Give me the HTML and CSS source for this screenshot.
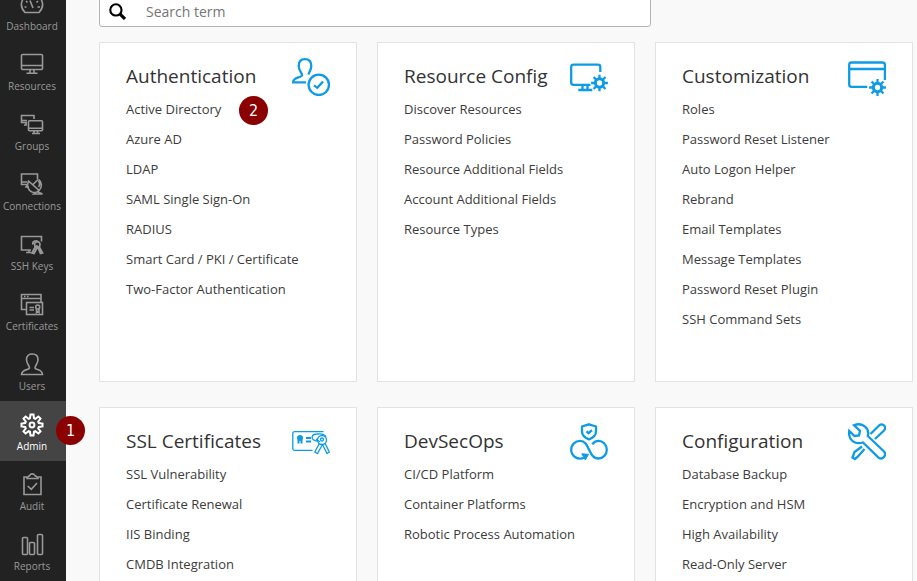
FILE: index.html
```html
<!DOCTYPE html>
<html lang="en">
<head>
<meta charset="utf-8">
<title>Admin</title>
<link rel="stylesheet" href="styles.css">
</head>
<body>
<svg class="defs" aria-hidden="true">
  <symbol id="cog" viewBox="-9 -9 18 18">
    <circle r="4.400" fill="none" stroke="currentColor" stroke-width="3.200"/>
    <path d="M0-5V-8.900M0 5V8.900M5 0H8.900M-5 0H-8.900M3.600-3.600L6.300-6.300M3.600 3.600L6.300 6.300M-3.600 3.600L-6.300 6.300M-3.600-3.600L-6.300-6.300" fill="none" stroke="currentColor" stroke-width="2.400"/>
  </symbol>
</svg>
<div class="app">
  <nav class="sidebar">
    <a class="nav-item" href="#">
      <svg class="nav-icon" viewBox="0 0 24 24"><path d="M5 19.500C-2 12 2 2 12 2S26 12 19 19.500ZM10 7.500L13 15M4.500 14H6.500M17.500 14H20M6 8L7.500 9.500M18 8L16.500 9.500"/></svg>
      <span>Dashboard</span>
    </a>
    <a class="nav-item" href="#">
      <svg class="nav-icon" viewBox="0 0 24 24"><rect x="1.500" y="1.500" width="21" height="15" rx="1"/><path d="M2 12.500H22M10 17V20M14 17V20M6.500 20.300H17.500"/></svg>
      <span>Resources</span>
    </a>
    <a class="nav-item" href="#">
      <svg class="nav-icon" viewBox="0 0 24 24"><path d="M14 6V2.500H1.500V9.500H7M2 7.500H7M4 12H7M6 9.500V12"/><rect x="8.500" y="7.800" width="14" height="10" rx="1"/><path d="M9 15.200H22M14 18V20.500M17.500 18V20.500M12 20.500H20"/></svg>
      <span>Groups</span>
    </a>
    <a class="nav-item" href="#">
      <svg class="nav-icon" viewBox="0 0 24 24"><path d="M17.500 6V1H1.500V11.500H7M2 9H7M5 14H9M7 11.500V14M8.500 8C6.500 13 8 17.500 12 19C15 20 18 19 19 17.500ZM19 17.500C22.500 14 22 9 18.500 6.500M12.500 12L18 6.500M18.500 8C20 10 20 12 18.500 14M17 18.500L22.500 21H13.500L15 19.500"/></svg>
      <span>Connections</span>
    </a>
    <a class="nav-item" href="#">
      <svg class="nav-icon" viewBox="0 0 24 24"><path d="M21.500 8.500V3.500H1.500V17H11M6 19.500H11M9 17V19.500"/><circle cx="17.300" cy="11.500" r="2.700"/><path d="M13 11.500C12 7.500 17 7 18.500 9M15.500 13.500L12 20L14 20.500L17.500 14M18 14L20.500 20.500L22.500 20L19 13.500M16 12.500L19 14.500" stroke-width="1.800"/></svg>
      <span>SSH Keys</span>
    </a>
    <a class="nav-item" href="#">
      <svg class="nav-icon" viewBox="0 0 24 24"><path d="M6 16.500H1.500V1.500H21V9M2 5.500H21M4 3.500H5.500M7 3.500H8.500"/><rect x="6.500" y="9.500" width="16" height="12"/><path d="M9.500 14.500H14M9.500 17H14M16.500 16V19.500L17.700 18.500L19 19.500V16"/><circle cx="17.700" cy="14" r="2"/></svg>
      <span>Certificates</span>
    </a>
    <a class="nav-item" href="#">
      <svg class="nav-icon" viewBox="0 0 24 24"><path d="M9.500 15C9.500 12.500 6.500 11 6.500 6.500C6.500 2.500 9 1 12.200 1S18 2.500 18 6.500C18 11 15 12.500 15 15C15.500 17 22.500 16.500 22.500 21.500H1.500C1.500 16.500 9 17 9.500 15Z"/></svg>
      <span>Users</span>
    </a>
    <a class="nav-item nav-item-active" href="#" aria-current="page">
      <svg class="nav-icon" viewBox="-12 -12 24 24"><path d="M-2-6.800L-1.500-10.500H1.500L2-6.800L3.400-6.200L6.400-8.500L8.500-6.400L6.200-3.400L6.800-2L10.500-1.500V1.500L6.800 2L6.200 3.400L8.500 6.400L6.400 8.500L3.400 6.200L2 6.800L1.500 10.500H-1.500L-2 6.800L-3.400 6.200L-6.400 8.500L-8.500 6.400L-6.200 3.400L-6.800 2L-10.500 1.500V-1.500L-6.800-2L-6.200-3.400L-8.500-6.400L-6.400-8.500L-3.400-6.200Z"/><circle r="2.400"/></svg>
      <span>Admin</span>
      <b class="badge badge-nav">1</b>
    </a>
    <a class="nav-item" href="#">
      <svg class="nav-icon" viewBox="0 0 24 24"><path d="M7 4H4V21.500H21V4H18M7 5.500C7 3 9.500 3.500 10 2C10.500 .5 14 .5 14.500 2C15 3.500 18 3 18 5.500ZM7.700 13L11.300 16.300L17 10"/></svg>
      <span>Audit</span>
    </a>
    <a class="nav-item" href="#">
      <svg class="nav-icon" viewBox="0 0 24 24"><rect x="2.500" y="4.500" width="5" height="17" rx="1"/><rect x="9.500" y="9.500" width="5" height="12" rx="1"/><rect x="17.500" y="1.500" width="5" height="20" rx="1"/></svg>
      <span>Reports</span>
    </a>
  </nav>

  <main class="content">
    <form class="search" role="search">
      <svg class="search-icon" viewBox="0 0 16 16"><circle cx="6.500" cy="6.500" r="5.300"/><path d="M10.500 10.500L15 15" stroke-width="3"/></svg>
      <input type="search" aria-label="Search term" placeholder="Search term">
    </form>

    <div class="cards">
      <section class="card">
        <header class="card-head">
          <h2>Authentication</h2>
          <svg class="card-icon" viewBox="0 0 38 38"><path d="M14 24.300H1.200C1 19 8.500 20 10 17.500C10.500 15 6.700 13 6.700 8C6.700 3.500 9 1.200 13 1.200S19.300 3.500 19.300 8C19.300 12 17 13.500 16.500 16.500"/><circle cx="26.800" cy="26.800" r="10.200"/><path d="M22 27.300L25.300 29.800L31 23.500"/></svg>
        </header>
        <ul>
          <li><a href="#">Active Directory</a><b class="badge badge-link">2</b></li>
          <li><a href="#">Azure AD</a></li>
          <li><a href="#">LDAP</a></li>
          <li><a href="#">SAML Single Sign-On</a></li>
          <li><a href="#">RADIUS</a></li>
          <li><a href="#">Smart Card / PKI / Certificate</a></li>
          <li><a href="#">Two-Factor Authentication</a></li>
        </ul>
      </section>

      <section class="card">
        <header class="card-head">
          <h2>Resource Config</h2>
          <svg class="card-icon" viewBox="0 0 38 38"><path d="M30.300 14V9Q30.300 6.700 28 6.700H3.500Q1.200 6.700 1.200 9V24.500Q1.200 26.800 3.500 26.800H20.500M12.500 27V32M17.500 27V32M8.300 32H22.300"/><use href="#cog" x="21" y="16.500" width="17" height="17"/></svg>
        </header>
        <ul>
          <li><a href="#">Discover Resources</a></li>
          <li><a href="#">Password Policies</a></li>
          <li><a href="#">Resource Additional Fields</a></li>
          <li><a href="#">Account Additional Fields</a></li>
          <li><a href="#">Resource Types</a></li>
        </ul>
      </section>

      <section class="card">
        <header class="card-head">
          <h2>Customization</h2>
          <svg class="card-icon" viewBox="0 0 38 38"><path d="M36.900 22V7Q36.900 4.500 34.500 4.500H3.500Q1.200 4.500 1.200 7V26.500Q1.200 28.800 3.500 28.800H19.300M1.200 11H36.900"/><use href="#cog" x="21" y="21" width="17" height="17"/></svg>
        </header>
        <ul>
          <li><a href="#">Roles</a></li>
          <li><a href="#">Password Reset Listener</a></li>
          <li><a href="#">Auto Logon Helper</a></li>
          <li><a href="#">Rebrand</a></li>
          <li><a href="#">Email Templates</a></li>
          <li><a href="#">Message Templates</a></li>
          <li><a href="#">Password Reset Plugin</a></li>
          <li><a href="#">SSH Command Sets</a></li>
        </ul>
      </section>

      <section class="card">
        <header class="card-head">
          <h2>SSL Certificates</h2>
          <svg class="card-icon card-icon-fine" viewBox="0 0 38 38"><path d="M31.500 8.700H2.500Q.8 8.700 .8 10.400V25.600Q.8 27.300 2.500 27.300H20.500"/><circle cx="8" cy="15" r="3" fill="currentColor" stroke="none"/><path d="M6.500 17V20.500M9.500 17V20.500M14 15H19M14 18.500H19" stroke-width="2"/><path d="M25 18C18 17 19 11 25 11C30 10.500 33 11.500 34 14"/><circle cx="30" cy="17" r="4.500"/><circle cx="30" cy="16.500" r="1.500"/><path d="M27.300 20.500L22.800 29L25.500 30.500L30.500 21.500M30.500 21.500L35 30.500L37.300 29L33.200 20.500M24 16L28 19"/></svg>
        </header>
        <ul>
          <li><a href="#">SSL Vulnerability</a></li>
          <li><a href="#">Certificate Renewal</a></li>
          <li><a href="#">IIS Binding</a></li>
          <li><a href="#">CMDB Integration</a></li>
        </ul>
      </section>

      <section class="card">
        <header class="card-head">
          <h2>DevSecOps</h2>
          <svg class="card-icon" viewBox="0 0 38 38"><path d="M19 1.300L26 3.500V8.500C26 12.500 23 14.800 19 16.300C15 14.800 12 12.500 12 8.500V3.500ZM16.500 8.300L18.500 10.200L22 7.200"/><path d="M14 34.800C7 37.500 1.200 32.500 1.200 26.700C1.200 21.500 5.500 17.800 10 17.800C20 17.800 18 35.500 28.500 35.500C33 35.500 36.800 31.500 36.800 26.700S33 17.800 28.500 17.800C26 17.800 23.800 19 22.300 21.300"/><path d="M11.800 30.800L18.500 31.300L15.300 37Z" fill="currentColor" stroke-width="1"/></svg>
        </header>
        <ul>
          <li><a href="#">CI/CD Platform</a></li>
          <li><a href="#">Container Platforms</a></li>
          <li><a href="#">Robotic Process Automation</a></li>
        </ul>
      </section>

      <section class="card">
        <header class="card-head">
          <h2>Configuration</h2>
          <svg class="card-icon" viewBox="0 0 38 38"><path d="M6 2.200C14-1 22 5 19.800 13L36 28.500C39 32 35 37 31 35L15 19.500C7 22 0 17 1.200 8L6.500 13L11 12.500L12 8ZM22.500 11L31 2.500C35-.5 39 4 36 7.500L27 16M14 23.500L6.500 29L4.500 34.500L7 36L10 33.500L16.500 26"/></svg>
        </header>
        <ul>
          <li><a href="#">Database Backup</a></li>
          <li><a href="#">Encryption and HSM</a></li>
          <li><a href="#">High Availability</a></li>
          <li><a href="#">Read-Only Server</a></li>
        </ul>
      </section>
    </div>
  </main>
</div>
</body>
</html>
```
FILE: styles.css
```css
* { box-sizing: border-box; }

body {
  margin: 0;
  background: #f9f9f9;
  color: #333;
  font-family: "Open Sans", "Noto Sans", sans-serif;
  font-size: 13px;
}

a { color: inherit; text-decoration: none; }

.defs { position: absolute; width: 0; height: 0; }

.app {
  display: flex;
  height: 100vh;
  overflow: hidden;
}

.sidebar {
  position: relative;
  z-index: 1;
  display: flex;
  flex: none;
  flex-direction: column;
  justify-content: flex-end;
  width: 66px;
  background: #222;
}

.nav-item {
  position: relative;
  display: flex;
  flex: none;
  flex-direction: column;
  align-items: center;
  gap: 2px;
  height: 60px;
  padding: 12px 2px 0 0;
  color: #999;
  font-size: 10px;
  line-height: 14px;
}

.nav-item-active { background: #444; color: #fff; }

.nav-icon {
  flex: none;
  width: 24px;
  height: 24px;
  fill: none;
  stroke: currentColor;
  stroke-width: 1.6;
}

.nav-item-active .nav-icon { stroke-width: 2; }

.badge {
  position: absolute;
  width: 29px;
  height: 29px;
  border-radius: 50%;
  background: #8b0000;
  color: #fff;
  font-family: "DejaVu Sans Condensed", "DejaVu Sans", sans-serif;
  font-size: 16px;
  font-weight: 400;
  line-height: 29px;
  text-align: center;
}

.badge-nav { top: 15px; right: -19px; }
.badge-link { top: 2px; left: 113px; }

.content {
  flex: 1;
  min-width: 0;
  padding: 0 4px 0 33px;
}

.search {
  display: flex;
  align-items: center;
  gap: 20px;
  width: 68%;
  max-width: 552px;
  height: 32px;
  margin: -5px 0 15px;
  padding-left: 9px;
  border: 1px solid #b5b5b5;
  border-radius: 3px;
  background: #fff;
}

.search-icon {
  flex: none;
  width: 17px;
  height: 17px;
  fill: none;
  stroke: #000;
  stroke-width: 2;
}

.search input {
  flex: 1;
  min-width: 0;
  padding: 0;
  border: 0;
  outline: 0;
  background: transparent;
  font: inherit;
  font-size: 14px;
}

.search input::placeholder { color: #757575; }

.cards {
  display: grid;
  grid-template-columns: repeat(3, 1fr);
  gap: 25px 20px;
}

.card {
  min-height: 340px;
  padding: 15px 26px;
  border: 1px solid #e3e3e3;
  background: #fff;
}

.card-head {
  display: flex;
  justify-content: space-between;
  height: 36px;
}

.card-head h2 {
  margin: 0;
  font-size: 19px;
  font-weight: 400;
  line-height: 36px;
  white-space: nowrap;
}

.card-icon {
  flex: none;
  width: 38px;
  height: 38px;
  color: #0d9be8;
  fill: none;
  stroke: currentColor;
  stroke-width: 2.3;
}

.card-icon-fine { stroke-width: 1.3; }

.card ul {
  margin: 0;
  padding: 0;
  list-style: none;
}

.card li {
  position: relative;
  color: #3c3c3c;
  line-height: 30px;
}
```
